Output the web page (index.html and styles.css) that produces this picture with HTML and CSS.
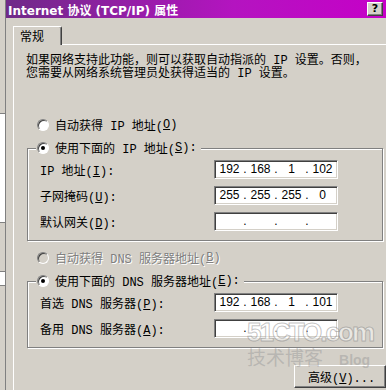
FILE: index.html
```html
<!DOCTYPE html>
<html lang="zh-CN">
<head>
    <meta charset="UTF-8">
    <meta name="viewport" content="width=device-width, initial-scale=1.0">
    <title>Internet 协议 (TCP/IP) 属性</title>
    <link rel="stylesheet" href="styles.css">
</head>
<body>
    <div class="desktop">
        <div class="behind">
            <div class="behind-box"></div>
            <div class="behind-box small"></div>
        </div>

        <div class="dialog">
            <div class="titlebar">
                <span class="title">Internet 协议 (TCP/IP) 属性</span>
                <span class="help">?</span>
            </div>

            <div class="dialog-body">
                <div class="tabs">
                    <div class="tab">常规</div>
                    <div class="tab-rest"></div>
                </div>

                <div class="page">
                    <p class="intro">如果网络支持此功能，则可以获取自动指派的 IP 设置。否则，<br>您需要从网络系统管理员处获得适当的 IP 设置。</p>

                    <div class="radio top"><span class="dot"></span>自动获得 IP 地址(<u>O</u>)</div>

                    <fieldset class="group">
                        <legend class="radio checked"><span class="dot"></span>使用下面的 IP 地址(<u>S</u>):</legend>
                        <div class="row">
                            <span class="label">IP 地址(<u>I</u>):</span>
                            <div class="ip">
                                <span>192</span><i>.</i><span>168</span><i>.</i><span>1</span><i>.</i><span>102</span>
                            </div>
                        </div>
                        <div class="row">
                            <span class="label">子网掩码(<u>U</u>):</span>
                            <div class="ip">
                                <span>255</span><i>.</i><span>255</span><i>.</i><span>255</span><i>.</i><span>0</span>
                            </div>
                        </div>
                        <div class="row">
                            <span class="label">默认网关(<u>D</u>):</span>
                            <div class="ip">
                                <span></span><i>.</i><span></span><i>.</i><span></span><i>.</i><span></span>
                            </div>
                        </div>
                    </fieldset>

                    <div class="radio top disabled"><span class="dot"></span>自动获得 DNS 服务器地址(<u>B</u>)</div>

                    <fieldset class="group">
                        <legend class="radio checked"><span class="dot"></span>使用下面的 DNS 服务器地址(<u>E</u>):</legend>
                        <div class="row">
                            <span class="label">首选 DNS 服务器(<u>P</u>):</span>
                            <div class="ip">
                                <span>192</span><i>.</i><span>168</span><i>.</i><span>1</span><i>.</i><span>101</span>
                            </div>
                        </div>
                        <div class="row">
                            <span class="label">备用 DNS 服务器(<u>A</u>):</span>
                            <div class="ip">
                                <span></span><i>.</i><span></span><i>.</i><span></span><i>.</i><span></span>
                            </div>
                        </div>
                    </fieldset>

                    <button class="button">高级(<u>V</u>)...</button>
                </div>
            </div>
        </div>

        <!-- watermark of the source site -->
        <div class="watermark">
            <div class="wm-big">51CTO.com</div>
            <div class="wm-small">技术博客<span>Blog</span></div>
        </div>
    </div>
</body>
</html>
```

FILE: styles.css
```css
body {
    margin: 0;
    background-color: #d4d0c8;
    font-family: "Liberation Mono", "Noto Sans CJK SC", monospace;
    font-size: 12px;
    color: #000;
    overflow: hidden;
}

.desktop {
    position: relative;
    display: flex;
    width: 386px;
    height: 390px;
    overflow: hidden;
}

/* window behind the dialog, only a strip is visible */
.behind {
    flex: none;
    width: 5px;
    padding-top: 113px;
    border-right: 1px solid #808080;
    background-color: #d4d0c8;
}

.behind-box {
    height: 108px;
    background-color: #fff;
    border-top: 1px solid #808080;
    border-bottom: 1px solid #808080;
}

.behind-box.small {
    height: 13px;
    margin-top: 48px;
}

.dialog {
    flex: 1;
    min-width: 0;
    display: flex;
    flex-direction: column;
}

.titlebar {
    height: 18px;
    flex: none;
    display: flex;
    align-items: center;
    justify-content: space-between;
    padding: 0 3px 0 2px;
    background: linear-gradient(to right, #6f2a88, #b414c0 60%, #c600c8);
}

.title {
    font-family: "DejaVu Sans", "Noto Sans CJK SC", sans-serif;
    font-weight: bold;
    font-size: 12px;
    color: #fff;
    white-space: nowrap;
}

.help {
    width: 14px;
    height: 12px;
    border: 1px solid;
    border-color: #fff #404040 #404040 #fff;
    box-shadow: inset -1px -1px 0 #808080;
    background-color: #d4d0c8;
    font-family: "DejaVu Sans", sans-serif;
    font-weight: bold;
    font-size: 11px;
    line-height: 12px;
    text-align: center;
}

.dialog-body {
    flex: 1;
    padding: 8px 0 0 7px;
}

.tabs {
    display: flex;
    align-items: flex-end;
    height: 19px;
}

.tab {
    width: 41px;
    height: 18px;
    padding-left: 6px;
    border-top: 1px solid #fff;
    border-left: 1px solid #fff;
    border-right: 1px solid #404040;
    border-top-right-radius: 2px;
    box-shadow: inset -1px 0 0 #808080;
    font-family: "Noto Sans CJK SC", sans-serif;
    line-height: 17px;
}

.tab-rest {
    flex: 1;
    border-bottom: 1px solid #fff;
}

.page {
    height: 360px;
    border-left: 1px solid #fff;
    padding-top: 10px;
}

.intro {
    margin: 0 0 0 12px;
    line-height: 13px;
    white-space: nowrap;
}

.radio {
    display: flex;
    align-items: center;
    height: 14px;
    white-space: nowrap;
}

.radio.top {
    margin: 37px 0 0 23px;
}

.radio.disabled {
    margin-top: 10px;
    color: #808080;
    text-shadow: 1px 1px 0 #fff;
}

.dot {
    position: relative;
    width: 10px;
    height: 10px;
    margin-right: 6px;
    border: 1px solid;
    border-color: #808080 #fff #fff #808080;
    border-radius: 50%;
    background-color: #fff;
    box-shadow: inset 1px 1px 0 #404040;
}

.radio.disabled .dot {
    background-color: #d4d0c8;
}

.radio.checked .dot::after {
    content: "";
    position: absolute;
    left: 3px;
    top: 3px;
    width: 4px;
    height: 4px;
    border-radius: 50%;
    background-color: #000;
}

.group {
    width: 356px;
    box-sizing: border-box;
    margin: 9px 0 0 13px;
    padding: 5px 0 9px 12px;
    border: 1px solid #808080;
    box-shadow: 1px 1px 0 #fff, inset 1px 1px 0 #fff;
}

.group legend {
    margin-left: -4px;
    padding: 0 4px 0 1px;
    background-color: #d4d0c8;
}

.row {
    display: grid;
    grid-template-columns: 174px 124px;
    align-items: center;
    margin-bottom: 7px;
}

.row:last-child {
    margin-bottom: 0;
}

.ip {
    display: grid;
    grid-template-columns: 27px 4px 27px 4px 27px 4px 27px;
    height: 19px;
    box-sizing: border-box;
    padding-left: 1px;
    border: 1px solid;
    border-color: #808080 #fff #fff #808080;
    box-shadow: inset 1px 1px 0 #404040, inset -1px -1px 0 #d4d0c8;
    background-color: #fff;
    font-family: "Liberation Sans", sans-serif;
    font-size: 12px;
    line-height: 17px;
    text-align: center;
}

.ip i {
    font-style: normal;
}

.button {
    display: block;
    width: 92px;
    height: 23px;
    margin: 17px 0 0 280px;
    padding: 0 0 0 13px;
    text-align: left;
    border: 1px solid;
    border-color: #fff #404040 #404040 #fff;
    box-shadow: inset -1px -1px 0 #808080;
    background-color: #d4d0c8;
    font-family: "Liberation Mono", "Noto Sans CJK SC", monospace;
    font-size: 12px;
    color: #000;
}

.watermark {
    position: absolute;
    left: 247px;
    top: 318px;
    color: rgba(255, 255, 255, 0.5);
    pointer-events: none;
}

.wm-big {
    font-family: "Liberation Sans", sans-serif;
    font-weight: bold;
    font-size: 26px;
    line-height: 28px;
    letter-spacing: -2px;
    -webkit-text-stroke: 1px rgba(120, 120, 120, 0.45);
}

.wm-small {
    display: flex;
    align-items: baseline;
    font-family: "Noto Sans CJK SC", sans-serif;
    font-size: 19px;
    line-height: 22px;
    color: rgba(150, 150, 150, 0.45);
}

.wm-small span {
    font-family: "Liberation Sans", sans-serif;
    font-size: 14px;
    font-weight: bold;
    margin-left: 16px;
}
```
